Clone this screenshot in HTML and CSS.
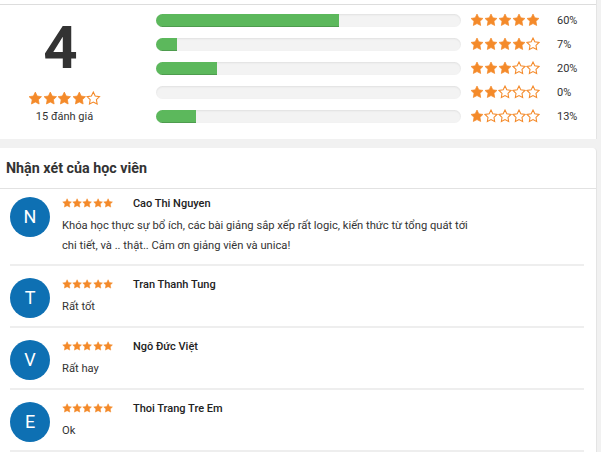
FILE: index.html
```html
<!DOCTYPE html>
<html lang="vi">
<head>
<meta charset="utf-8">
<link rel="stylesheet" href="styles.css">
</head>
<body>
<svg width="0" height="0" class="defs">
  <defs>
    <path id="star" d="M12 1.8l3.1 6.5 7.1 1-5.1 5 1.2 7.1L12 18.1l-6.3 3.3 1.2-7.1-5.1-5 7.1-1z"/>
  </defs>
</svg>
<div class="page">
  <section class="card summary">
    <div class="summary-inner">
      <div class="score">
        <div class="score-num">4</div>
        <div class="stars stars-md">
          <svg viewBox="0 0 24 24" class="st full"><use href="#star"/></svg>
          <svg viewBox="0 0 24 24" class="st full"><use href="#star"/></svg>
          <svg viewBox="0 0 24 24" class="st full"><use href="#star"/></svg>
          <svg viewBox="0 0 24 24" class="st full"><use href="#star"/></svg>
          <svg viewBox="0 0 24 24" class="st empty"><use href="#star"/></svg>
        </div>
        <div class="score-count">15 đánh giá</div>
      </div>
      <div class="bars">
        <div class="bar-row">
          <div class="bar"><div class="fill" style="width:60%"></div></div>
          <div class="stars stars-md">
            <svg viewBox="0 0 24 24" class="st full"><use href="#star"/></svg><svg viewBox="0 0 24 24" class="st full"><use href="#star"/></svg><svg viewBox="0 0 24 24" class="st full"><use href="#star"/></svg><svg viewBox="0 0 24 24" class="st full"><use href="#star"/></svg><svg viewBox="0 0 24 24" class="st full"><use href="#star"/></svg>
          </div>
          <div class="pct">60%</div>
        </div>
        <div class="bar-row">
          <div class="bar"><div class="fill" style="width:7%"></div></div>
          <div class="stars stars-md">
            <svg viewBox="0 0 24 24" class="st full"><use href="#star"/></svg><svg viewBox="0 0 24 24" class="st full"><use href="#star"/></svg><svg viewBox="0 0 24 24" class="st full"><use href="#star"/></svg><svg viewBox="0 0 24 24" class="st full"><use href="#star"/></svg><svg viewBox="0 0 24 24" class="st empty"><use href="#star"/></svg>
          </div>
          <div class="pct">7%</div>
        </div>
        <div class="bar-row">
          <div class="bar"><div class="fill" style="width:20%"></div></div>
          <div class="stars stars-md">
            <svg viewBox="0 0 24 24" class="st full"><use href="#star"/></svg><svg viewBox="0 0 24 24" class="st full"><use href="#star"/></svg><svg viewBox="0 0 24 24" class="st full"><use href="#star"/></svg><svg viewBox="0 0 24 24" class="st empty"><use href="#star"/></svg><svg viewBox="0 0 24 24" class="st empty"><use href="#star"/></svg>
          </div>
          <div class="pct">20%</div>
        </div>
        <div class="bar-row">
          <div class="bar"><div class="fill" style="width:0%"></div></div>
          <div class="stars stars-md">
            <svg viewBox="0 0 24 24" class="st full"><use href="#star"/></svg><svg viewBox="0 0 24 24" class="st full"><use href="#star"/></svg><svg viewBox="0 0 24 24" class="st empty"><use href="#star"/></svg><svg viewBox="0 0 24 24" class="st empty"><use href="#star"/></svg><svg viewBox="0 0 24 24" class="st empty"><use href="#star"/></svg>
          </div>
          <div class="pct">0%</div>
        </div>
        <div class="bar-row">
          <div class="bar"><div class="fill" style="width:13%"></div></div>
          <div class="stars stars-md">
            <svg viewBox="0 0 24 24" class="st full"><use href="#star"/></svg><svg viewBox="0 0 24 24" class="st empty"><use href="#star"/></svg><svg viewBox="0 0 24 24" class="st empty"><use href="#star"/></svg><svg viewBox="0 0 24 24" class="st empty"><use href="#star"/></svg><svg viewBox="0 0 24 24" class="st empty"><use href="#star"/></svg>
          </div>
          <div class="pct">13%</div>
        </div>
      </div>
    </div>
  </section>

  <section class="card reviews">
    <h2 class="reviews-title">Nhận xét của học viên</h2>
    <div class="review first">
      <div class="avatar">N</div>
      <div class="review-body">
        <div class="review-head">
          <div class="stars stars-sm">
            <svg viewBox="0 0 24 24" class="st full"><use href="#star"/></svg><svg viewBox="0 0 24 24" class="st full"><use href="#star"/></svg><svg viewBox="0 0 24 24" class="st full"><use href="#star"/></svg><svg viewBox="0 0 24 24" class="st full"><use href="#star"/></svg><svg viewBox="0 0 24 24" class="st full"><use href="#star"/></svg>
          </div>
          <span class="name">Cao Thi Nguyen</span>
        </div>
        <p class="comment">Khóa học thực sự bổ ích, các bài giảng sắp xếp rất logic, kiến thức từ tổng quát tới<br>chi tiết, và .. thật.. Cảm ơn giảng viên và unica!</p>
      </div>
    </div>
    <div class="review">
      <div class="avatar">T</div>
      <div class="review-body">
        <div class="review-head">
          <div class="stars stars-sm">
            <svg viewBox="0 0 24 24" class="st full"><use href="#star"/></svg><svg viewBox="0 0 24 24" class="st full"><use href="#star"/></svg><svg viewBox="0 0 24 24" class="st full"><use href="#star"/></svg><svg viewBox="0 0 24 24" class="st full"><use href="#star"/></svg><svg viewBox="0 0 24 24" class="st full"><use href="#star"/></svg>
          </div>
          <span class="name">Tran Thanh Tung</span>
        </div>
        <p class="comment">Rất tốt</p>
      </div>
    </div>
    <div class="review">
      <div class="avatar">V</div>
      <div class="review-body">
        <div class="review-head">
          <div class="stars stars-sm">
            <svg viewBox="0 0 24 24" class="st full"><use href="#star"/></svg><svg viewBox="0 0 24 24" class="st full"><use href="#star"/></svg><svg viewBox="0 0 24 24" class="st full"><use href="#star"/></svg><svg viewBox="0 0 24 24" class="st full"><use href="#star"/></svg><svg viewBox="0 0 24 24" class="st full"><use href="#star"/></svg>
          </div>
          <span class="name">Ngô Đức Việt</span>
        </div>
        <p class="comment">Rất hay</p>
      </div>
    </div>
    <div class="review">
      <div class="avatar">E</div>
      <div class="review-body">
        <div class="review-head">
          <div class="stars stars-sm">
            <svg viewBox="0 0 24 24" class="st full"><use href="#star"/></svg><svg viewBox="0 0 24 24" class="st full"><use href="#star"/></svg><svg viewBox="0 0 24 24" class="st full"><use href="#star"/></svg><svg viewBox="0 0 24 24" class="st full"><use href="#star"/></svg><svg viewBox="0 0 24 24" class="st full"><use href="#star"/></svg>
          </div>
          <span class="name">Thoi Trang Tre Em</span>
        </div>
        <p class="comment">Ok</p>
      </div>
    </div>
  </section>
</div>
</body>
</html>
```

FILE: styles.css
```css
html, body {
  margin: 0;
  padding: 0;
}
body {
  background: #f1f1f1;
  font-family: Roboto, "Liberation Sans", Arial, sans-serif;
  color: #333;
  overflow: hidden;
}
.defs {
  position: absolute;
  width: 0;
  height: 0;
}
.page {
  width: 597px;
  display: flex;
  flex-direction: column;
}
.card {
  background: #fff;
  border-right: 1px solid #e4e4e4;
}
.summary {
  padding-top: 4px;
  margin-bottom: 9px;
}
.summary-inner {
  border-top: 1px solid #dddddd;
  display: flex;
  height: 135px;
  box-sizing: border-box;
}
.score {
  width: 129px;
  display: flex;
  flex-direction: column;
  align-items: center;
}
.score-num {
  font-size: 60px;
  font-weight: 700;
  line-height: 60px;
  margin-top: 13px;
  margin-right: 8px;
  color: #333;
}
.score .stars {
  margin-top: 13px;
}
.score-count {
  font-size: 11px;
  line-height: 13px;
  margin-top: 4px;
  color: #333;
}
.bars {
  margin-left: 27px;
  padding-top: 3px;
  display: flex;
  flex-direction: column;
}
.bar-row {
  height: 24px;
  display: flex;
  align-items: center;
}
.bar {
  width: 305px;
  height: 13px;
  background: #f3f3f3;
  border-radius: 7px;
  overflow: hidden;
  box-shadow: inset 0 1px 2px rgba(0, 0, 0, 0.08);
}
.fill {
  height: 100%;
  background: #5cb85c;
  box-shadow: inset 0 -1px 0 rgba(0, 0, 0, 0.15);
}
.stars {
  display: flex;
}
.st {
  display: block;
}
.st.full {
  fill: #f48a2a;
  stroke: #f48a2a;
  stroke-width: 1.2;
}
.st.empty {
  fill: #fff;
  stroke: #f48a2a;
  stroke-width: 1.8;
}
.stars-md .st {
  width: 14.6px;
  height: 14.6px;
}
.bar-row .stars {
  margin-left: 9px;
}
.bar-row .stars-md .st {
  width: 14px;
  height: 14px;
}
.pct {
  margin-left: 17px;
  font-size: 11px;
  color: #333;
}
.reviews {
  border-top-right-radius: 4px;
  padding-bottom: 20px;
}
.reviews-title {
  margin: 0;
  font-size: 14.3px;
  font-weight: 700;
  color: #333;
  padding: 0 6px;
  height: 40px;
  line-height: 40px;
  border-bottom: 1px solid #e2e2e2;
}
.review {
  display: flex;
  align-items: flex-start;
  margin: 0 12px 0 10px;
  padding: 12px 0 8px;
  border-bottom: 2px solid #eeeeee;
}
.review.first {
  padding-top: 8px;
}
.avatar {
  width: 40px;
  height: 40px;
  flex: none;
  border-radius: 50%;
  background: #0e70b3;
  color: #fff;
  font-size: 18px;
  line-height: 40px;
  text-align: center;
  margin-right: 12px;
}
.review-body {
  flex: 1;
}
.review-head {
  display: flex;
  align-items: flex-start;
  height: 14px;
}
.stars-sm {
  padding-top: 1px;
}
.stars-sm .st {
  width: 10.2px;
  height: 10.2px;
}
.name {
  margin-left: 20px;
  font-size: 11px;
  line-height: 14px;
  font-weight: 500;
  color: #222;
}
.comment {
  margin: 5px 0 0;
  font-size: 11.2px;
  line-height: 20px;
  color: #333;
}
```
